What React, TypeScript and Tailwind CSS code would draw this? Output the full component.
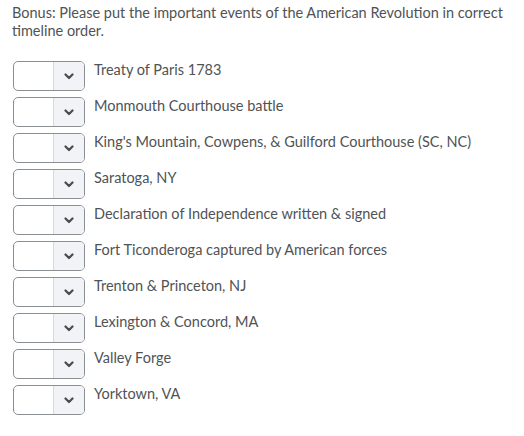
import React from "react";

const items = [
  "Treaty of Paris 1783",
  "Monmouth Courthouse battle",
  "King's Mountain, Cowpens, & Guilford Courthouse (SC, NC)",
  "Saratoga, NY",
  "Declaration of Independence written & signed",
  "Fort Ticonderoga captured by American forces",
  "Trenton & Princeton, NJ",
  "Lexington & Concord, MA",
  "Valley Forge",
  "Yorktown, VA",
];

function SelectBox() {
  return (
    <div className="flex h-[30px] w-[72px] shrink-0 overflow-hidden rounded-[5px] border border-[#8a8f93] bg-white">
      <div className="flex-1" />
      <div className="flex w-[31px] items-center justify-center border-l border-[#d3d9e3] bg-[#f1f3f6]">
        <svg width="10" height="7" viewBox="0 0 10 7">
          <path d="M1.5 1.5 L5 5 L8.5 1.5" fill="none" stroke="#494c4e" strokeWidth="2.2" strokeLinecap="round" strokeLinejoin="round" />
        </svg>
      </div>
    </div>
  );
}

export default function App() {
  return (
    <div className="h-[436px] w-[524px] bg-white pl-[12px] pt-[4px] text-[#4f5355]" style={{ fontFamily: "Lato, 'Noto Sans', sans-serif" }}>
      <p className="text-[14.5px] leading-[18px]">
        Bonus: Please put the important events of the American Revolution in correct timeline order.
      </p>
      <div className="mt-[21px] flex flex-col gap-[6px] pl-[1px]">
        {items.map((t) => (
          <div key={t} className="flex items-start gap-[9px]">
            <SelectBox />
            <span className="text-[14.5px] leading-[18px]">{t}</span>
          </div>
        ))}
      </div>
    </div>
  );
}
